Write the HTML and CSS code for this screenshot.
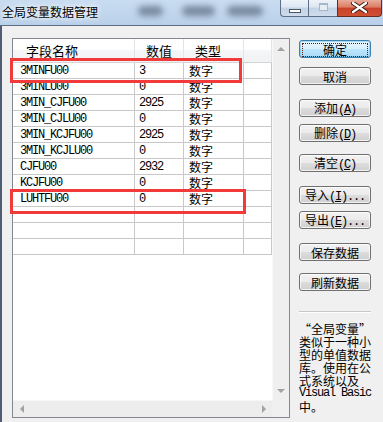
FILE: index.html
```html
<!DOCTYPE html>
<html lang="zh-CN">
  <head>
    <meta charset="UTF-8" />
    <title>全局变量数据管理</title>
    <link rel="stylesheet" href="styles.css">
  </head>
  <body>
    <div class="window">
      <div class="titlebar">
        <span class="title">全局变量数据管理</span>
        <div class="glass">
          <i class="blob blob-1"></i>
          <i class="blob blob-2"></i>
          <i class="blob blob-3"></i>
        </div>
        <div class="caption">
          <span class="cap cap-min"><i></i></span>
          <span class="cap cap-max"><i></i></span>
          <span class="cap cap-close">
            <svg width="17" height="11" viewBox="0 0 17 11">
              <path d="M2 1 L15 10 M15 1 L2 10" stroke="#3a1a12" stroke-width="4.2" stroke-linecap="round" />
              <path d="M2 1 L15 10 M15 1 L2 10" stroke="#fff" stroke-width="2.4" stroke-linecap="round" />
            </svg>
          </span>
        </div>
      </div>

      <div class="client">
        <div class="listview">
          <div class="lv-main">
            <div class="grid">
              <div class="row head">
                <div class="cell c1">字段名称</div>
                <div class="cell c2">数值</div>
                <div class="cell c3">类型</div>
                <div class="cell c4"></div>
              </div>
              <div class="row">
                <div class="cell c1 en">3MINFU00</div>
                <div class="cell c2 en">3</div>
                <div class="cell c3">数字</div>
                <div class="cell c4"></div>
              </div>
              <div class="row">
                <div class="cell c1 en">3MINLU00</div>
                <div class="cell c2 en">0</div>
                <div class="cell c3">数字</div>
                <div class="cell c4"></div>
              </div>
              <div class="row">
                <div class="cell c1 en">3MIN_CJFU00</div>
                <div class="cell c2 en">2925</div>
                <div class="cell c3">数字</div>
                <div class="cell c4"></div>
              </div>
              <div class="row">
                <div class="cell c1 en">3MIN_CJLU00</div>
                <div class="cell c2 en">0</div>
                <div class="cell c3">数字</div>
                <div class="cell c4"></div>
              </div>
              <div class="row">
                <div class="cell c1 en">3MIN_KCJFU00</div>
                <div class="cell c2 en">2925</div>
                <div class="cell c3">数字</div>
                <div class="cell c4"></div>
              </div>
              <div class="row">
                <div class="cell c1 en">3MIN_KCJLU00</div>
                <div class="cell c2 en">0</div>
                <div class="cell c3">数字</div>
                <div class="cell c4"></div>
              </div>
              <div class="row">
                <div class="cell c1 en">CJFU00</div>
                <div class="cell c2 en">2932</div>
                <div class="cell c3">数字</div>
                <div class="cell c4"></div>
              </div>
              <div class="row">
                <div class="cell c1 en">KCJFU00</div>
                <div class="cell c2 en">0</div>
                <div class="cell c3">数字</div>
                <div class="cell c4"></div>
              </div>
              <div class="row">
                <div class="cell c1 en">LUHTFU00</div>
                <div class="cell c2 en">0</div>
                <div class="cell c3">数字</div>
                <div class="cell c4"></div>
              </div>
              <div class="row">
                <div class="cell c1"></div><div class="cell c2"></div><div class="cell c3"></div><div class="cell c4"></div>
              </div>
              <div class="row">
                <div class="cell c1"></div><div class="cell c2"></div><div class="cell c3"></div><div class="cell c4"></div>
              </div>
              <div class="row">
                <div class="cell c1"></div><div class="cell c2"></div><div class="cell c3"></div><div class="cell c4"></div>
              </div>
            </div>
            <div class="vscroll">
              <span class="arrow arrow-up"></span>
              <span class="arrow arrow-down"></span>
            </div>
          </div>
          <div class="lv-bottom">
            <div class="hscroll">
              <span class="arrow arrow-left"></span>
              <span class="arrow arrow-right"></span>
            </div>
            <div class="corner"></div>
          </div>
        </div>

        <div class="side">
          <button class="btn btn-default"><span class="focus">确定</span></button>
          <button class="btn gap-s">取消</button>
          <button class="btn gap-l">添加<span class="en">(<u>A</u>)</span></button>
          <button class="btn gap-xs">删除<span class="en">(<u>D</u>)</span></button>
          <button class="btn gap-m">清空<span class="en">(<u>C</u>)</span></button>
          <button class="btn gap-l">导入<span class="en">(<u>I</u>)...</span></button>
          <button class="btn gap-xs">导出<span class="en">(<u>E</u>)...</span></button>
          <button class="btn gap-l">保存数据</button>
          <button class="btn gap-m">刷新数据</button>
          <div class="sep"></div>
          <div class="note">
            <div class="line">“全局变量”</div>
            <div class="line">类似于一种小</div>
            <div class="line">型的单值数据</div>
            <div class="line">库。使用在公</div>
            <div class="line">式系统以及</div>
            <div class="line en">Visual Basic</div>
            <div class="line">中。</div>
          </div>
        </div>

        <div class="mark mark-1"></div>
        <div class="mark mark-2"></div>
      </div>
    </div>
  </body>
</html>
```

FILE: styles.css
```css
body {
  margin: 0;
  font-family: "Noto Sans CJK SC", sans-serif;
  font-size: 12px;
  background-color: #f0f0f0;
  color: #000;
}

.window {
  position: relative;
  width: 383px;
  height: 422px;
  overflow: hidden;
}

/* title bar (aero glass) */
.titlebar {
  display: flex;
  height: 25px;
  border-bottom: 1px solid #5b6c82;
  background: linear-gradient(#c9ddf1, #b9d0e9);
}

.title {
  padding: 4px 0 0 2px;
  line-height: 16px;
  text-shadow: 0 0 4px #fff, 0 0 7px #fff;
}

.glass {
  display: flex;
  margin: 6px 0 0 40px;
  height: 10px;
}

.blob {
  display: block;
  height: 10px;
  border-radius: 5px;
  background-color: rgba(70, 85, 105, 0.6);
  filter: blur(3px);
}

.blob-1 { width: 25px; }
.blob-2 { width: 33px; margin-left: 19px; }
.blob-3 { width: 36px; margin-left: 12px; }

.caption {
  display: flex;
  margin-left: auto;
  margin-right: 1px;
  height: 17px;
}

.cap {
  display: flex;
  align-items: center;
  justify-content: center;
  box-sizing: border-box;
  height: 17px;
  border: 1px solid #5e6e84;
  border-top: none;
  background: linear-gradient(#eef3f9 0%, #dce6f2 45%, #c3d3e6 50%, #cfdcec 100%);
}

.cap-min {
  width: 28px;
  border-radius: 0 0 0 4px;
  border-right: none;
}

.cap-min i {
  display: block;
  width: 10px;
  height: 2px;
  margin-top: 5px;
  background-color: #fff;
  border: 1px solid #4a5566;
}

.cap-max {
  width: 29px;
  border-right: none;
}

.cap-max i {
  display: block;
  width: 7px;
  height: 5px;
  margin-bottom: 2px;
  border: 1px solid #a9b6c6;
  border-top-width: 2px;
  background-color: #e6edf5;
}

.cap-close {
  width: 45px;
  border-radius: 0 0 4px 0;
  border-color: #6b2a1e;
  background: linear-gradient(#e9ac9c 0%, #dc7c63 45%, #c8432b 50%, #cf5033 100%);
}

.cap-close svg {
  margin-bottom: 2px;
}

/* client area */
.client {
  position: relative;
  display: flex;
  gap: 9px;
  height: 396px;
  padding: 12px 0 0 10px;
  border-left: 2px solid #4e5d72;
  box-sizing: border-box;
}

.listview {
  display: flex;
  flex-direction: column;
  width: 278px;
  height: 380px;
  box-sizing: border-box;
  border: 1px solid #828790;
  background-color: #fff;
}

.lv-main {
  display: flex;
  height: 361px;
}

.grid {
  width: 259px;
}

.row {
  display: grid;
  grid-template-columns: 122px 49px 60px 28px;
  height: 16px;
}

.cell {
  box-sizing: border-box;
  height: 16px;
  line-height: 16px;
  border-right: 1px solid #c8c8c8;
  border-bottom: 1px solid #c8c8c8;
  white-space: nowrap;
  overflow: hidden;
}

.row .c1 { padding-left: 7px; }
.row .c2 { padding-left: 4px; }
.row .c3 { padding-left: 5px; }

.row.head {
  height: 24px;
}

.head .cell {
  height: 24px;
  line-height: 23px;
  font-size: 13px;
  border-right-color: #e1e4e8;
  border-bottom-color: #d5d5d5;
  background: linear-gradient(#ffffff 0%, #ffffff 45%, #f5f6f8 50%, #f1f2f4 100%);
}

.head .c1 { padding-left: 13px; }
.head .c2 { padding-left: 11px; }
.head .c3 { padding-left: 11px; }

.en {
  font-family: "Liberation Mono", monospace;
  letter-spacing: -1.2px;
}

/* scrollbars */
.vscroll {
  display: flex;
  flex-direction: column;
  justify-content: space-between;
  align-items: center;
  width: 17px;
  box-sizing: border-box;
  padding: 8px 0 7px;
  background-color: #efefef;
  border-left: 1px solid #f8f8f8;
}

.lv-bottom {
  display: flex;
  height: 17px;
}

.hscroll {
  display: flex;
  justify-content: space-between;
  align-items: center;
  width: 259px;
  box-sizing: border-box;
  padding: 0 6px 0 7px;
  background-color: #ededed;
  border-top: 1px solid #f6f6f6;
}

.corner {
  width: 17px;
  background-color: #f0f0f0;
}

.arrow {
  width: 0;
  height: 0;
  border: 4px solid transparent;
}

.arrow-up {
  border-top-width: 0;
  border-bottom-color: #a2a2a2;
}

.arrow-down {
  border-bottom-width: 0;
  border-top-color: #a2a2a2;
}

.arrow-left {
  border-left-width: 0;
  border-right-color: #a2a2a2;
}

.arrow-right {
  border-right-width: 0;
  border-left-color: #a2a2a2;
}

/* buttons */
.side {
  display: flex;
  flex-direction: column;
  width: 72px;
  padding-top: 2px;
}

.btn {
  width: 72px;
  height: 18px;
  padding: 0;
  box-sizing: border-box;
  border: 1px solid #707070;
  border-radius: 3px;
  background: linear-gradient(#f2f2f2 0%, #ebebeb 48%, #dddddd 52%, #cfcfcf 100%);
  box-shadow: inset 0 0 0 1px rgba(255, 255, 255, 0.75);
  font-family: "Noto Sans CJK SC", sans-serif;
  font-size: 12px;
  line-height: 15px;
  color: #000;
  white-space: nowrap;
}

.btn-default {
  border-color: #3c7fb1;
  background: linear-gradient(#eaf6fd 0%, #d9f0fc 48%, #bee6fd 52%, #a7d9f5 100%);
  box-shadow: inset 0 0 0 1px rgba(120, 200, 240, 0.6);
  padding: 2px;
}

.focus {
  display: block;
  height: 12px;
  line-height: 11px;
  border: 1px dotted #5a1e10;
}

.gap-xs { margin-top: 7px; }
.gap-s { margin-top: 9px; }
.gap-m { margin-top: 12px; }
.gap-l { margin-top: 14px; }

.sep {
  height: 1px;
  margin-top: 20px;
  border-bottom: 1px solid #fff;
  background-color: #c8c8c8;
}

.note {
  margin-top: 9px;
  white-space: nowrap;
}

.note .line {
  height: 13px;
  line-height: 13px;
}

/* red annotation boxes */
.mark {
  position: absolute;
  left: 8px;
  box-sizing: border-box;
  border: 3px solid #f23a3a;
}

.mark-1 {
  top: 32px;
  width: 232px;
  height: 25px;
}

.mark-2 {
  top: 163px;
  width: 236px;
  height: 25px;
}
```
